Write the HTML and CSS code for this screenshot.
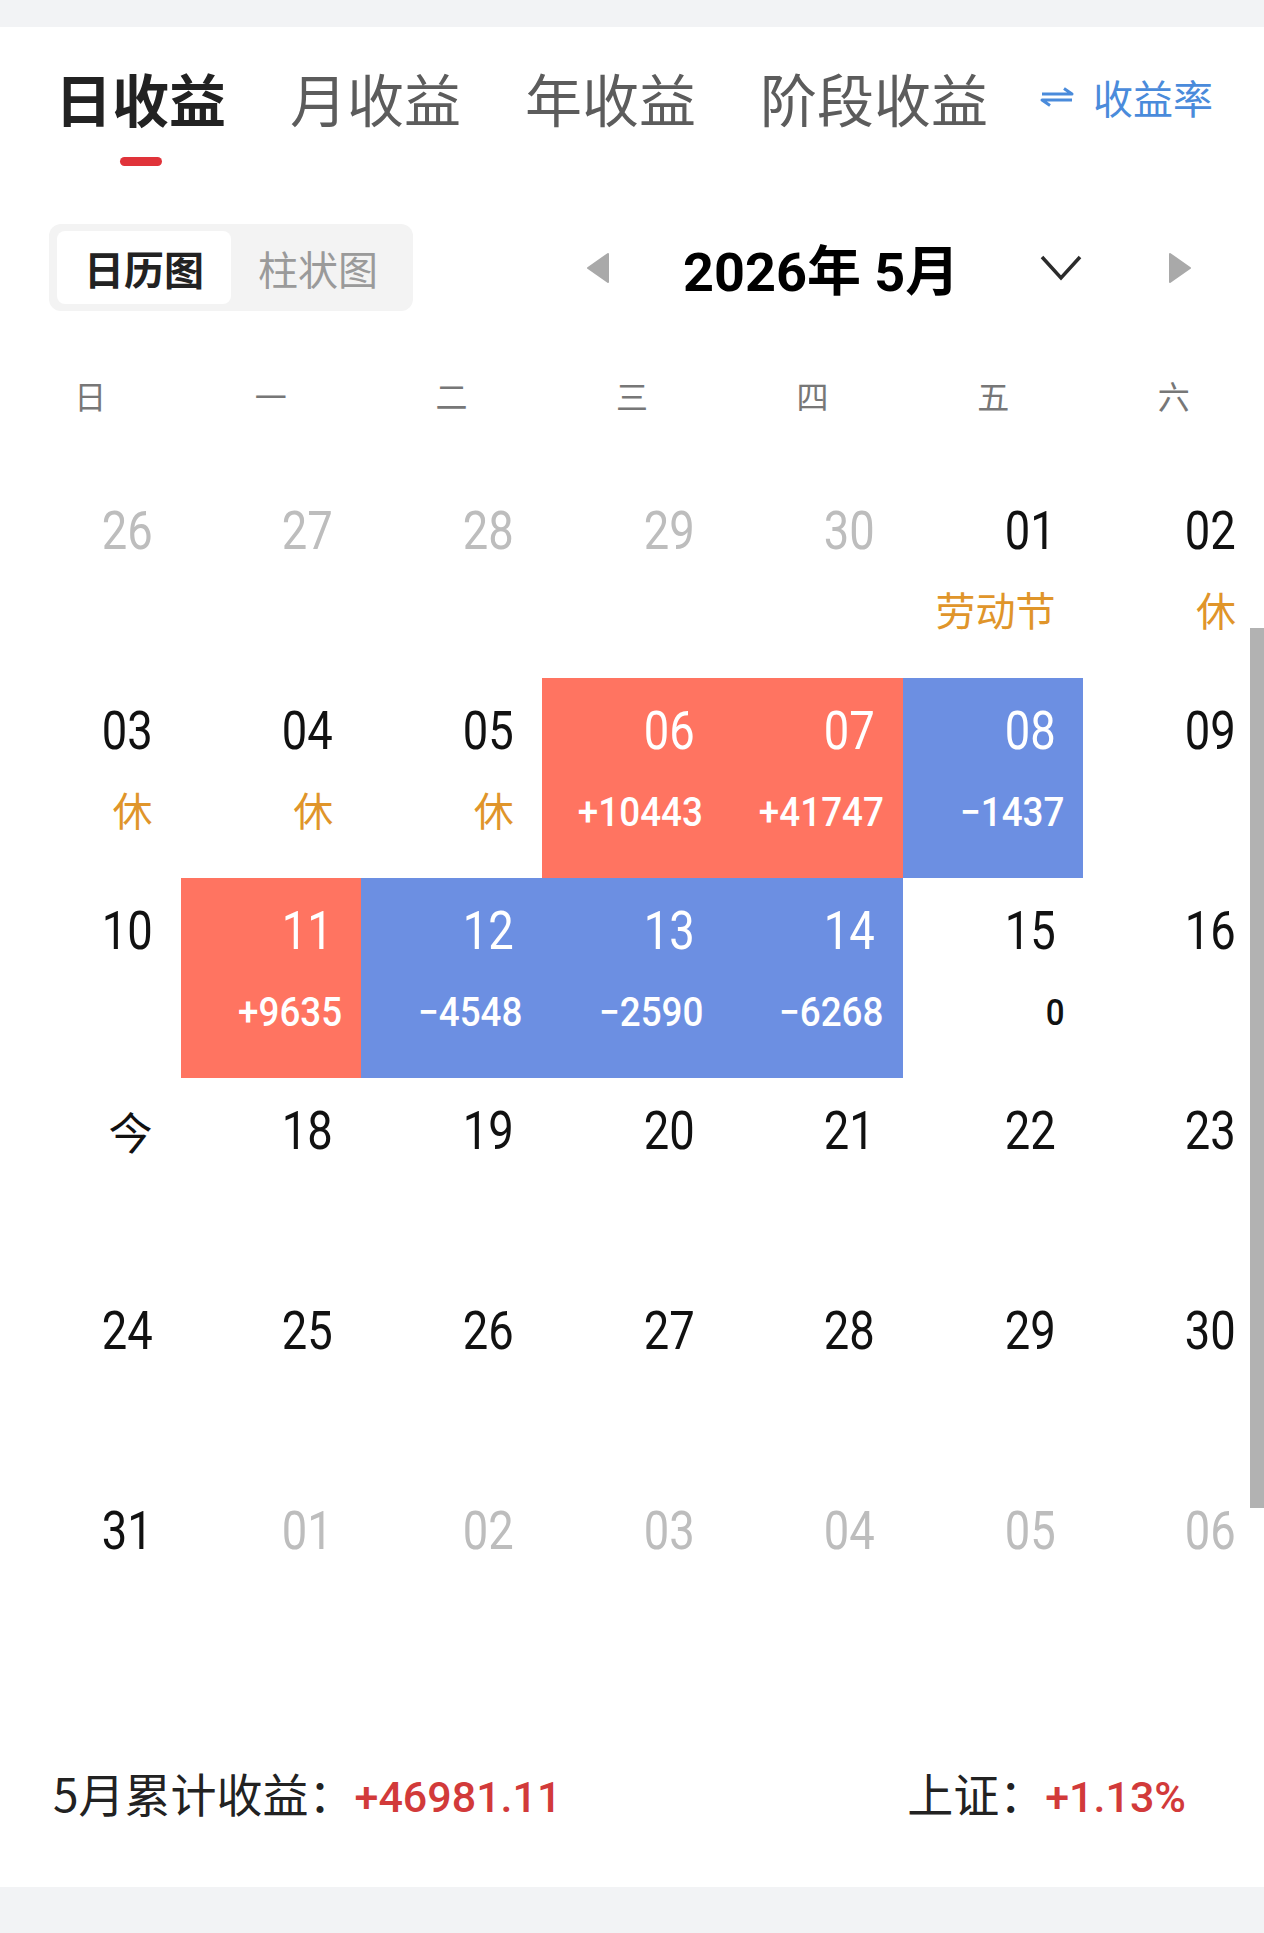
FILE: index.html
```html
<!DOCTYPE html>
<html lang="zh-CN">
<head>
    <meta charset="UTF-8">
    <meta name="viewport" content="width=device-width, initial-scale=1.0">
    <title>日收益</title>
    <link rel="stylesheet" href="styles.css">
</head>
<body>
    <div class="page">
        <div class="topbar"></div>

        <div class="tabs">
            <div class="tab-list">
                <div class="tab active">日收益</div>
                <div class="tab">月收益</div>
                <div class="tab">年收益</div>
                <div class="tab">阶段收益</div>
            </div>
            <div class="rate">
                <svg class="swap" width="34" height="20" viewBox="0 0 34 20">
                    <path d="M2 7 H32 L24 1.5" />
                    <path d="M32 13 H2 L10 18.5" />
                </svg>
                <span>收益率</span>
            </div>
        </div>

        <div class="toolbar">
            <div class="switch">
                <div class="seg on">日历图</div>
                <div class="seg">柱状图</div>
            </div>
            <div class="month-nav">
                <svg class="arrow" width="22" height="30" viewBox="0 0 22 30"><polygon points="21,1 1,15 21,29" /></svg>
                <div class="month">2026年 5月</div>
                <svg class="chevron" width="44" height="28" viewBox="0 0 44 28"><polyline points="3,3 22,24 41,3" /></svg>
                <svg class="arrow" width="22" height="30" viewBox="0 0 22 30"><polygon points="1,1 21,15 1,29" /></svg>
            </div>
        </div>

        <div class="weekdays">
            <div>日</div><div>一</div><div>二</div><div>三</div><div>四</div><div>五</div><div>六</div>
        </div>

        <div class="calendar">
            <!-- week 1 -->
            <div class="day muted"><span class="num">26</span></div>
            <div class="day muted"><span class="num">27</span></div>
            <div class="day muted"><span class="num">28</span></div>
            <div class="day muted"><span class="num">29</span></div>
            <div class="day muted"><span class="num">30</span></div>
            <div class="day"><span class="num">01</span><span class="tag">劳动节</span></div>
            <div class="day"><span class="num">02</span><span class="tag">休</span></div>
            <!-- week 2 -->
            <div class="day"><span class="num">03</span><span class="tag">休</span></div>
            <div class="day"><span class="num">04</span><span class="tag">休</span></div>
            <div class="day"><span class="num">05</span><span class="tag">休</span></div>
            <div class="day up"><span class="num">06</span><span class="amt">+10443</span></div>
            <div class="day up"><span class="num">07</span><span class="amt">+41747</span></div>
            <div class="day down"><span class="num">08</span><span class="amt">−1437</span></div>
            <div class="day"><span class="num">09</span></div>
            <!-- week 3 -->
            <div class="day"><span class="num">10</span></div>
            <div class="day up"><span class="num">11</span><span class="amt">+9635</span></div>
            <div class="day down"><span class="num">12</span><span class="amt">−4548</span></div>
            <div class="day down"><span class="num">13</span><span class="amt">−2590</span></div>
            <div class="day down"><span class="num">14</span><span class="amt">−6268</span></div>
            <div class="day"><span class="num">15</span><span class="amt flat">0</span></div>
            <div class="day"><span class="num">16</span></div>
            <!-- week 4 -->
            <div class="day"><span class="num today">今</span></div>
            <div class="day"><span class="num">18</span></div>
            <div class="day"><span class="num">19</span></div>
            <div class="day"><span class="num">20</span></div>
            <div class="day"><span class="num">21</span></div>
            <div class="day"><span class="num">22</span></div>
            <div class="day"><span class="num">23</span></div>
            <!-- week 5 -->
            <div class="day"><span class="num">24</span></div>
            <div class="day"><span class="num">25</span></div>
            <div class="day"><span class="num">26</span></div>
            <div class="day"><span class="num">27</span></div>
            <div class="day"><span class="num">28</span></div>
            <div class="day"><span class="num">29</span></div>
            <div class="day"><span class="num">30</span></div>
            <!-- week 6 -->
            <div class="day"><span class="num">31</span></div>
            <div class="day muted"><span class="num">01</span></div>
            <div class="day muted"><span class="num">02</span></div>
            <div class="day muted"><span class="num">03</span></div>
            <div class="day muted"><span class="num">04</span></div>
            <div class="day muted"><span class="num">05</span></div>
            <div class="day muted"><span class="num">06</span></div>
        </div>

        <div class="summary">
            <div>5月累计收益：<span class="red">+46981.11</span></div>
            <div>上证：<span class="red">+1.13%</span></div>
        </div>

        <div class="bottombar"></div>

        <div class="scrollbar"></div>
    </div>
</body>
</html>
```

FILE: styles.css
```css
* {
    box-sizing: border-box;
}
body {
    margin: 0;
    background: #fff;
    font-family: Roboto, "Noto Sans CJK SC", sans-serif;
    color: #111;
}
.page {
    position: relative;
    width: 1264px;
    height: 1933px;
    overflow: hidden;
}
.topbar {
    height: 27px;
    background: #f2f3f5;
}

/* tabs */
.tabs {
    display: flex;
    align-items: flex-start;
    justify-content: space-between;
    padding: 38px 51px 0 55px;
    white-space: nowrap;
}
.tab-list {
    display: flex;
    align-items: flex-start;
    gap: 64px;
}
.tab {
    flex-shrink: 0;
    font-family: "Noto Sans CJK SC", sans-serif;
    font-size: 57px;
    line-height: 64px;
    color: #5c5c5c;
}
.tab.active {
    color: #222;
    font-weight: 700;
}
.tab.active::after {
    content: "";
    display: block;
    width: 42px;
    height: 9px;
    margin: 28px auto 0;
    border-radius: 5px;
    background: #e0333a;
}
.rate {
    flex-shrink: 0;
    display: flex;
    align-items: center;
    gap: 19px;
    height: 64px;
    font-family: "Noto Sans CJK SC", sans-serif;
    font-size: 40px;
    color: #4a8bdb;
}
.swap path {
    fill: none;
    stroke: #4a8bdb;
    stroke-width: 3;
    stroke-linejoin: round;
}

/* chart switch + month */
.toolbar {
    display: flex;
    align-items: center;
    margin-top: 58px;
    padding-left: 49px;
}
.switch {
    display: flex;
    padding: 7px 8px;
    background: #f3f3f3;
    border-radius: 12px;
}
.seg {
    width: 174px;
    height: 73px;
    display: flex;
    align-items: center;
    justify-content: center;
    font-family: "Noto Sans CJK SC", sans-serif;
    font-size: 40px;
    color: #9a9a9a;
    border-radius: 8px;
}
.seg.on {
    background: #fff;
    color: #222;
    font-weight: 700;
}
.month-nav {
    display: flex;
    align-items: center;
    margin-left: 174px;
}
.arrow polygon {
    fill: #a9a9a9;
    stroke: #a9a9a9;
    stroke-width: 2;
    stroke-linejoin: round;
}
.month {
    width: 430px;
    padding-left: 74px;
    font-size: 54px;
    font-weight: 700;
    color: #000;
    white-space: nowrap;
}
.chevron {
    margin-right: 86px;
}
.chevron polyline {
    fill: none;
    stroke: #2b2b2b;
    stroke-width: 3.5;
}

/* weekday header */
.weekdays {
    display: grid;
    grid-template-columns: repeat(7, 1fr);
    margin-top: 62px;
    font-family: "Noto Sans CJK SC", sans-serif;
    font-size: 32px;
    line-height: 44px;
    color: #777;
    text-align: center;
}

/* calendar grid */
.calendar {
    display: grid;
    grid-template-columns: repeat(7, 1fr);
    grid-auto-rows: 200px;
    margin-top: 61px;
}
.day {
    display: flex;
    flex-direction: column;
    align-items: flex-end;
    padding: 23px 19px 0 0;
}
.num {
    display: block;
    margin-right: 9px;
    font-size: 54px;
    line-height: 60px;
    transform: scaleX(.84);
    transform-origin: right center;
}
.num.today {
    font-family: "Noto Sans CJK SC", sans-serif;
    font-size: 44px;
    transform: none;
}
.muted .num {
    color: #bdbdbd;
}
.tag {
    margin: 24px 9px 0 0;
    font-family: "Noto Sans CJK SC", sans-serif;
    font-size: 40px;
    line-height: 48px;
    color: #e0952a;
}
.amt {
    display: block;
    margin-top: 28px;
    font-size: 40px;
    line-height: 48px;
    font-weight: 500;
    transform: scaleX(.92);
    transform-origin: right center;
}
.amt.flat {
    font-size: 36px;
    color: #111;
}
.up {
    background: #ff7461;
}
.down {
    background: #6c8fe2;
}
.up .num, .up .amt, .down .num, .down .amt {
    color: #fff;
}

/* month total */
.summary {
    display: flex;
    justify-content: space-between;
    margin-top: 86px;
    padding: 0 78px 0 53px;
    font-family: "Noto Sans CJK SC", sans-serif;
    font-size: 46px;
    line-height: 56px;
    color: #222;
}
.red {
    font-family: Roboto, sans-serif;
    font-size: 43px;
    font-weight: 500;
    color: #d23a3a;
}
.bottombar {
    position: absolute;
    left: 0;
    right: 0;
    bottom: 0;
    height: 46px;
    background: #f2f3f5;
}
.scrollbar {
    position: absolute;
    top: 628px;
    right: 0;
    width: 14px;
    height: 880px;
    background: #b2b2b2;
}
```
